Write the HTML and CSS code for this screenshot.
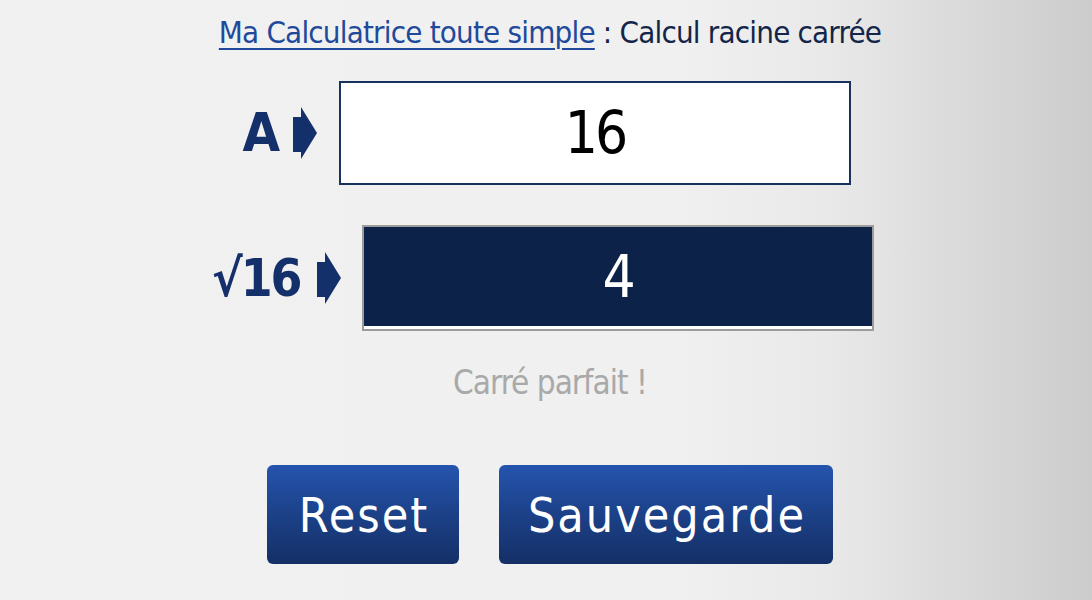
FILE: index.html
```html
<!DOCTYPE html>
<html lang="fr">
<head>
<meta charset="utf-8">
<title>Calcul racine carrée</title>
<link rel="stylesheet" href="styles.css">
</head>
<body>
<main class="calc">
  <h1 class="title"><a class="title-link" href="#">Ma Calculatrice toute simple</a> : Calcul racine carrée</h1>

  <div class="row row-input">
    <span class="label"><span class="label-text">A</span></span>
    <svg class="arrow" viewBox="0 0 24 52" width="24" height="52" aria-hidden="true"><polygon points="0,10 8,10 8,0 24,26 8,52 8,45 0,45"/></svg>
    <div class="field field-in">16</div>
  </div>

  <div class="row row-output">
    <span class="label"><span class="label-text">√16</span></span>
    <svg class="arrow" viewBox="0 0 24 52" width="24" height="52" aria-hidden="true"><polygon points="0,10 8,10 8,0 24,26 8,52 8,45 0,45"/></svg>
    <div class="field field-out">4</div>
  </div>

  <p class="note">Carré parfait !</p>

  <div class="actions">
    <button class="btn btn-reset" type="button">Reset</button>
    <button class="btn btn-save" type="button">Sauvegarde</button>
  </div>
</main>
</body>
</html>
```
FILE: styles.css
```css
html, body {
  margin: 0;
  height: 100%;
}

body {
  padding-left: 8px;
  box-sizing: border-box;
  min-height: 600px;
  background: linear-gradient(90deg, #f1f1f1 0%, #f0f0f0 62%, #e9e9e9 76%, #dadada 88%, #cccccc 100%);
  font-family: "DejaVu Sans Condensed", "Liberation Sans", sans-serif;
  color: #13284d;
}

.calc {
  display: flex;
  flex-direction: column;
  align-items: center;
}

.title {
  margin: 0;
  padding-top: 12px;
  font-size: 31px;
  line-height: 40px;
  letter-spacing: -0.8px;
  font-weight: normal;
  color: #13264a;
  white-space: nowrap;
}

.title-link {
  color: #1f4a9b;
  text-decoration: underline;
  text-decoration-thickness: 2px;
  text-underline-offset: 5px;
}

.row {
  display: flex;
  align-items: center;
}

.row-input {
  margin-top: 29px;
}

.row-output {
  margin-top: 40px;
}

.label {
  display: flex;
  justify-content: flex-end;
  width: 27px;
  margin-right: 17px;
  white-space: nowrap;
  font-size: 54px;
  font-weight: bold;
  color: #14306a;
  line-height: 1;
}

.row-output .label {
  width: 72px;
  margin-right: 18px;
  font-size: 51px;
}

.label-text {
  flex: none;
  letter-spacing: -2px;
  margin-right: -2px;
}

.arrow {
  display: block;
  fill: #14306a;
  margin-right: 22px;
}

.row-output .arrow {
  margin-right: 21px;
}

.field {
  box-sizing: border-box;
  width: 512px;
  height: 104px;
  display: flex;
  align-items: center;
  justify-content: center;
  font-size: 58px;
  line-height: 1;
  letter-spacing: -3px;
}

.field-in {
  background: #ffffff;
  border: 2px solid #18325e;
  color: #000000;
}

.field-out {
  height: 106px;
  background: #0c2249;
  border: 2px solid #9c9c9c;
  box-shadow: inset 0 -3px 0 #ffffff;
  color: #ffffff;
  padding-bottom: 3px;
}

.note {
  margin: 30px 0 0;
  font-size: 33px;
  line-height: 44px;
  letter-spacing: -1px;
  color: #a9a9a9;
}

.actions {
  margin-top: 60px;
  display: flex;
  gap: 40px;
}

.btn {
  height: 99px;
  border: none;
  border-radius: 6px;
  background: linear-gradient(180deg, #2554ae 0%, #1c4188 50%, #142f66 100%);
  color: #ffffff;
  font-family: inherit;
  font-size: 48px;
  letter-spacing: 2px;
  padding: 0 0 0 2px;
  cursor: pointer;
}

.btn-reset {
  width: 192px;
}

.btn-save {
  width: 334px;
}
```
